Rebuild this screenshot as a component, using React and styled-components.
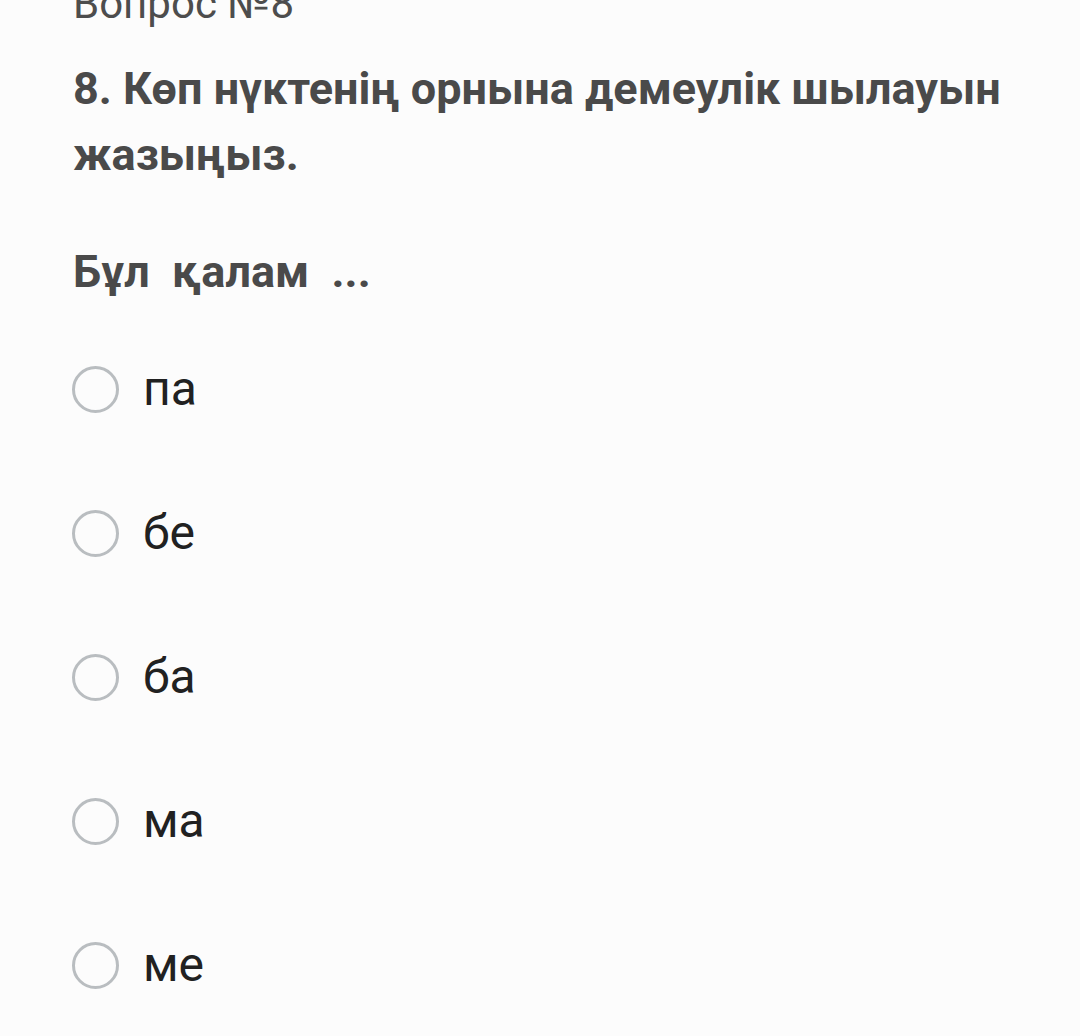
import React from "react";
import styled, { createGlobalStyle } from "styled-components";

const Global = createGlobalStyle`
  html, body {
    margin: 0;
    padding: 0;
    background: #fcfcfc;
  }
  body {
    font-family: Roboto, "Noto Sans", sans-serif;
  }
`;

const Page = styled.div`
  width: 1080px;
  height: 1036px;
  overflow: hidden;
  box-sizing: border-box;
  padding: 0 30px 0 73px;
  background: #fcfcfc;
`;

const Caption = styled.div`
  margin-top: -26px;
  font-size: 42px;
  line-height: 60px;
  color: #4d4d4d;
`;

const Question = styled.h2`
  margin: 22px 0 0;
  font-size: 45px;
  font-weight: 700;
  line-height: 66px;
  color: #4a4a4a;
`;

const Prompt = styled.p`
  margin: 51px 0 0;
  font-size: 45px;
  font-weight: 700;
  line-height: 66px;
  color: #4a4a4a;
  white-space: pre;
`;

const Options = styled.div`
  margin-top: 60px;
  display: flex;
  flex-direction: column;
  gap: 96px;
`;

const Option = styled.label`
  display: flex;
  align-items: center;
  gap: 24px;
  height: 48px;
  cursor: pointer;
`;

const Radio = styled.span`
  width: 47px;
  height: 47px;
  box-sizing: border-box;
  border-radius: 50%;
  border: 3px solid #b9bdc0;
  flex: none;
  margin-left: -1px;
`;

const OptionText = styled.span`
  font-size: 48px;
  line-height: 48px;
  color: #212121;
`;

const options = ["па", "бе", "ба", "ма", "ме"];

export default function App() {
  return (
    <Page>
      <Global />
      <Caption>Вопрос №8</Caption>
      <Question>8. Көп нүктенің орнына демеулік шылауын жазыңыз.</Question>
      <Prompt>{"Бұл  қалам  ..."}</Prompt>
      <Options>
        {options.map((o) => (
          <Option key={o}>
            <Radio />
            <OptionText>{o}</OptionText>
          </Option>
        ))}
      </Options>
    </Page>
  );
}
